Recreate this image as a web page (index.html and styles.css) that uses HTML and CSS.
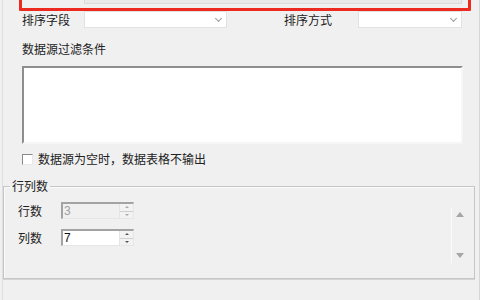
FILE: index.html
```html
<!DOCTYPE html>
<html lang="zh-CN">
<head>
<meta charset="utf-8">
<link rel="stylesheet" href="styles.css">
</head>
<body>
<div class="page">
  <div class="frame">
    <div class="frame-input"></div>
  </div>

  <div class="sort-row">
    <span class="label">排序字段</span>
    <div class="combo"><span class="chev"></span></div>
    <span></span>
    <span class="label">排序方式</span>
    <div class="combo"><span class="chev"></span></div>
  </div>

  <div class="filter-label">数据源过滤条件</div>
  <div class="textarea"></div>

  <div class="check-row">
    <span class="checkbox"></span>
    <span class="check-text">数据源为空时，数据表格不输出</span>
  </div>

  <fieldset class="group">
    <legend class="legend">行列数</legend>
    <div class="group-body">
      <div class="fields">
        <div class="field-row">
          <span class="field-label">行数</span>
          <div class="spin disabled"><span class="spin-value">3</span><span class="spin-btns"><i class="up"></i><i class="down"></i></span></div>
        </div>
        <div class="field-row">
          <span class="field-label">列数</span>
          <div class="spin"><span class="spin-value">7</span><span class="spin-btns"><i class="up"></i><i class="down"></i></span></div>
        </div>
      </div>
      <div class="scroller">
        <span class="arrow-up"></span>
        <span class="arrow-down"></span>
      </div>
    </div>
  </fieldset>
</div>
</body>
</html>
```

FILE: styles.css
```css
html, body {
  margin: 0;
  padding: 0;
}
body {
  width: 480px;
  height: 300px;
  overflow: hidden;
  background: #f0f0f0;
  font-family: "Noto Sans CJK SC", "Microsoft YaHei", sans-serif;
  font-size: 12px;
  color: #222;
  border-right: 1px solid #d6d6d6;
  box-sizing: border-box;
}
.page {
  margin-left: 2px;
  height: 300px;
  border-left: 1px solid #dedede;
  display: flex;
  flex-direction: column;
}
.frame {
  box-sizing: border-box;
  margin-top: -20px;
  margin-left: 16px;
  width: 452px;
  height: 31px;
  border: 3px solid #ec2a20;
  border-radius: 1px;
  padding-left: 62px;
  padding-top: 4px;
}
.frame-input {
  width: 376px;
  height: 16px;
  background: #e9e9e9;
  border: 1px solid #dcdcdc;
  border-top: none;
}
.sort-row {
  margin-top: 0;
  margin-left: 19px;
  display: grid;
  grid-template-columns: 62px 143px 57px 74px 104px;
  height: 17px;
  align-items: center;
}
.label {
  line-height: 16px;
}
.combo {
  position: relative;
  box-sizing: border-box;
  height: 17px;
  background: #fff;
  border: 1px solid #e2e2e2;
}
.chev {
  position: absolute;
  right: 5px;
  top: 4px;
  width: 4px;
  height: 4px;
  border-right: 1px solid #9a9a9a;
  border-bottom: 1px solid #9a9a9a;
  transform: rotate(45deg);
}
.filter-label {
  margin-top: 13px;
  margin-left: 19px;
  line-height: 16px;
}
.textarea {
  box-sizing: border-box;
  margin-top: 9px;
  margin-left: 19px;
  width: 441px;
  height: 78px;
  background: #fff;
  border-top: 2px solid #8e8e8e;
  border-left: 2px solid #8e8e8e;
  border-right: 2px solid #f6f6f6;
  border-bottom: 2px solid #f6f6f6;
}
.check-row {
  margin-top: 7px;
  margin-left: 19px;
  display: flex;
  align-items: center;
  height: 16px;
}
.checkbox {
  box-sizing: border-box;
  width: 11px;
  height: 11px;
  background: #fff;
  border: 1px solid #8a8a8a;
  border-right-color: #e8e8e8;
  border-bottom-color: #e8e8e8;
}
.check-text {
  margin-left: 5px;
  line-height: 16px;
}
.group {
  margin: 11px 0 0 0;
  width: 472px;
  height: 101px;
  box-sizing: border-box;
  padding: 0;
  border: 1px solid #c6c6c6;
  box-shadow: inset 1px 1px 0 #fafafa, 0 1px 0 #d4d4d4;
}
.legend {
  margin-left: 6px;
  padding: 0 2px;
  line-height: 16px;
}
.group-body {
  display: flex;
  justify-content: space-between;
  padding: 6px 8px 0 14px;
}
.fields {
  display: flex;
  flex-direction: column;
  gap: 10px;
  padding-top: 2px;
}
.field-row {
  display: flex;
  align-items: center;
  height: 17px;
}
.field-label {
  width: 43px;
  line-height: 16px;
}
.spin {
  box-sizing: border-box;
  width: 73px;
  height: 17px;
  display: flex;
  background: #fff;
  border-top: 2px solid #a3a3a3;
  border-left: 2px solid #a3a3a3;
  border-right: 1px solid #e6e6e6;
  border-bottom: 1px solid #e6e6e6;
}
.spin.disabled {
  background: #f0f0f0;
}
.spin-value {
  flex: 1;
  line-height: 14px;
  font-family: "Liberation Sans", sans-serif;
  font-size: 12px;
  padding-left: 1px;
  color: #111;
}
.disabled .spin-value {
  color: #a0a0a0;
}
.spin-btns {
  width: 13px;
  display: flex;
  flex-direction: column;
  border-left: 1px solid #e4e4e4;
  background: #f2f2f2;
}
.spin-btns i {
  flex: 1;
  display: flex;
  align-items: center;
  justify-content: center;
}
.spin-btns i::before {
  content: "";
  width: 0;
  height: 0;
  border-left: 2px solid transparent;
  border-right: 2px solid transparent;
}
.spin-btns .up::before {
  border-bottom: 2px solid #555;
}
.spin-btns .down::before {
  border-top: 2px solid #555;
}
.spin-btns .down {
  border-top: 1px solid #cfcfcf;
}
.disabled .spin-btns .up::before {
  border-bottom-color: #aaa;
}
.disabled .spin-btns .down::before {
  border-top-color: #aaa;
}
.scroller {
  margin-top: 8px;
  width: 15px;
  height: 55px;
  border-left: 1px solid #fbfbfb;
  display: flex;
  flex-direction: column;
  justify-content: space-between;
  align-items: center;
  padding: 4px 0 5px 2px;
  box-sizing: border-box;
}
.arrow-up {
  width: 0;
  height: 0;
  border-left: 4px solid transparent;
  border-right: 4px solid transparent;
  border-bottom: 5px solid #a6a6a6;
}
.arrow-down {
  width: 0;
  height: 0;
  border-left: 4px solid transparent;
  border-right: 4px solid transparent;
  border-top: 5px solid #a6a6a6;
}
```
